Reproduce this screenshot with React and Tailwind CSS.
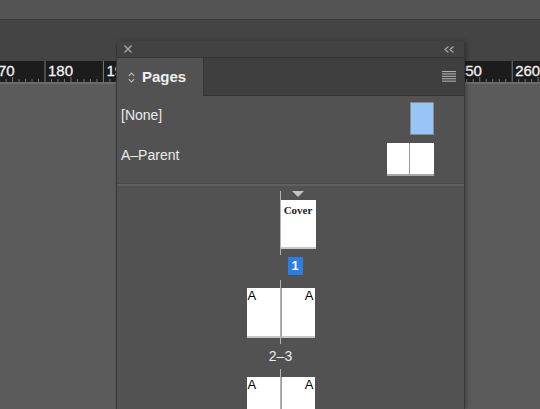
import React from "react";

// only the labels that show beside the panel
const majors = [
  { x: -13.4, label: "170" },
  { x: 45, label: "180" },
  { x: 103.4, label: "190" },
  { x: 453.8, label: "250" },
  { x: 512.2, label: "260" },
];

function Ruler() {
  const minor = [];
  for (let x = -13.4; x < 540; x += 58.4 / 9) {
    minor.push(x);
  }
  return (
    <svg width="540" height="21" className="block">
      <rect width="540" height="21" fill="#1c1c1c" />
      {majors.map((m) => (
        <g key={m.label}>
          <line x1={m.x} y1="0" x2={m.x} y2="21" stroke="#7a7a7a" strokeWidth="1" />
          <text
            x={m.x + 3}
            y="15"
            fill="#f2f2f2"
            fontSize="15"
            stroke="#f2f2f2"
            strokeWidth="0.3"
            fontFamily="'Liberation Sans', Arial, sans-serif"
          >
            {m.label}
          </text>
        </g>
      ))}
      {minor.map((x, i) =>
        i % 9 === 0 ? null : (
          <line
            key={i}
            x1={x}
            y1={i % 9 === 4 ? 16 : 18}
            x2={x}
            y2="21"
            stroke="#777"
            strokeWidth="1"
          />
        )
      )}
    </svg>
  );
}

function Spread({ top }) {
  return (
    <div className={"relative w-[70px] h-[64px] " + top}>
      <div className="absolute left-[34px] top-0 bottom-0 w-px bg-[#b4b4b4]"></div>
      <div className="ml-[1px] mt-[8px] flex h-[50px] w-[68px]">
        <div className="w-[34px] h-full bg-white border-b-2 border-[#c8c8c8]">
          <span className="block pl-[1px] text-[13px] leading-[15px] text-black">A</span>
        </div>
        <div className="w-[34px] h-full bg-white border-b-2 border-[#c8c8c8] border-l border-l-[#9a9a9a]">
          <span className="block pr-[1px] text-right text-[13px] leading-[15px] text-black">A</span>
        </div>
      </div>
    </div>
  );
}

export default function App() {
  return (
    <div
      className="relative w-[540px] h-[409px] overflow-hidden bg-[#5b5b5b]"
      style={{ fontFamily: "'Liberation Sans', Arial, sans-serif" }}
    >
      {/*barras superiores*/}
      <div className="h-[20px] bg-[#545454] border-b border-[#3a3a3a]"></div>
      <div className="h-[41px] bg-[#444444]"></div>
      <Ruler />
      <div className="h-[2px] bg-[#6c6c6c]"></div>

      {/*panel Pages*/}
      <div className="absolute left-[116px] top-[41px] bottom-0 w-[349px] rounded-t-[4px] bg-[#525252] border-x border-[#363636] shadow-[2px_0_4px_rgba(0,0,0,0.25)]">
        <div className="h-[17px] flex items-center justify-between px-[6px] bg-[#424242] border-b border-[#353535] rounded-t-[4px]">
          <svg width="10" height="10" viewBox="0 0 10 10">
            <path d="M1.5 1.5 L8.5 8.5 M8.5 1.5 L1.5 8.5" stroke="#a8a8a8" strokeWidth="1.4" />
          </svg>
          <svg width="11" height="7" viewBox="0 0 11 7" className="mr-[3px]">
            <path d="M4.5 0.5 L1 3.5 L4.5 6.5 M9.5 0.5 L6 3.5 L9.5 6.5" stroke="#a8a8a8" strokeWidth="1.2" fill="none" />
          </svg>
        </div>
        <div className="h-[38px] flex bg-[#3f3f3f]">
          <div className="w-[86px] flex items-center gap-[7px] pl-[11px] bg-[#525252]">
            <svg width="7" height="11" viewBox="0 0 7 11">
              <path d="M0.8 3.8 L3.5 1 L6.2 3.8 M0.8 7.2 L3.5 10 L6.2 7.2" stroke="#b8b8b8" strokeWidth="1.1" fill="none" />
            </svg>
            <span className="text-[15px] font-bold text-[#f0f0f0]">Pages</span>
          </div>
          <div className="flex-1 flex items-center justify-end pr-[8px] border-l border-b border-[#363636]">
            <svg width="14" height="11" viewBox="0 0 14 11">
              <rect y="0" width="14" height="1.1" fill="#b0b0b0" />
              <rect y="2.4" width="14" height="1.1" fill="#b0b0b0" />
              <rect y="4.8" width="14" height="1.1" fill="#b0b0b0" />
              <rect y="7.2" width="14" height="1.1" fill="#b0b0b0" />
              <rect y="9.6" width="14" height="1.1" fill="#b0b0b0" />
            </svg>
          </div>
        </div>

        {/*parents*/}
        <div className="pt-[6px] pr-[30px] pl-[4px] text-[14px] text-[#ececec]">
          <div className="flex justify-between items-start">
            <span className="pt-[5px] leading-[17px]">[None]</span>
            <div className="w-[24px] h-[33px] bg-[#97c5f7] border border-[#8a8a8a]"></div>
          </div>
          <div className="flex justify-between items-start mt-[8px]">
            <span className="pt-[4px] leading-[17px]">A–Parent</span>
            <div className="flex w-[47px] h-[33px] bg-white border-b-2 border-[#a8a8a8]">
              <div className="w-[23px] h-full border-r border-[#9a9a9a]"></div>
            </div>
          </div>
        </div>
        <div className="mt-[7px] h-[3px] bg-[#5f5f5f] border-t border-[#4a4a4a]"></div>

        {/*paginas*/}
        <div className="flex flex-col items-center pr-[20px] pt-[5px]">
          <div className="relative w-[70px] h-[64px]">
            <div className="absolute left-[34px] top-0 bottom-0 w-px bg-[#b4b4b4]"></div>
            <svg width="12" height="6" viewBox="0 0 12 6" className="absolute left-[46px] top-0">
              <path d="M0 0 H12 L6 6 Z" fill="#c4c4c4" />
            </svg>
            <div className="ml-[35px] mt-[9px] w-[35px] h-[49px] bg-white border-b-2 border-[#c8c8c8]">
              <span
                className="block text-center pt-[4px] text-[11px] font-bold leading-[12px] text-[#222]"
                style={{ fontFamily: "'Liberation Serif', 'Times New Roman', serif" }}
              >
                Cover
              </span>
            </div>
          </div>
          <div className="w-[70px] mt-[2px]">
            <div className="ml-[42px] w-[15px] h-[18px] flex items-center justify-center bg-[#2b7de1] text-white text-[13px] font-bold">
              1
            </div>
          </div>
          <Spread top="mt-[5px]" />
          <span className="mt-[4px] text-[14px] leading-[16px] text-[#ececec]">2–3</span>
          <Spread top="mt-[5px]" />
        </div>
      </div>
    </div>
  );
}
